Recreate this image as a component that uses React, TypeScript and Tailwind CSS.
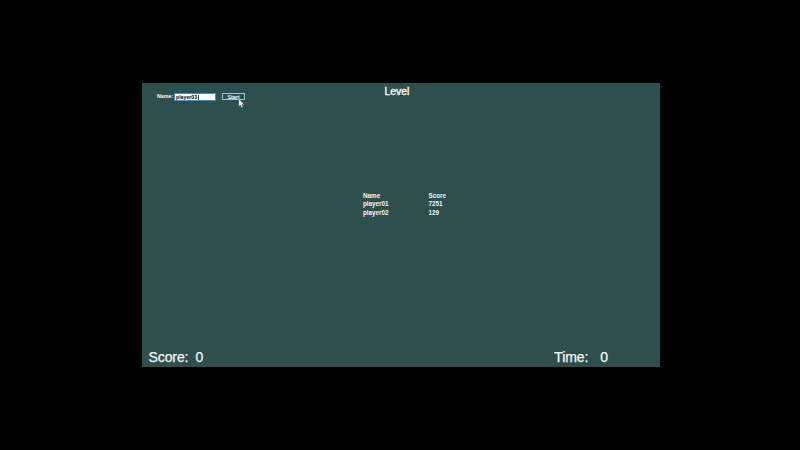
import React, { useState } from 'react';

const scores = [
  { name: 'player01', score: 7251 },
  { name: 'player02', score: 129 },
];

function Cursor() {
  return (
    <svg className="absolute left-[15px] top-[4px]" width="7" height="11" viewBox="0 0 7 11">
      <path d="M0.8 0.8v7.6l1.7-1.5 1.2 2.8 1.3-.6-1.2-2.7h2.4z" fill="#fff" stroke="#1c3030" strokeWidth="0.3" />
    </svg>
  );
}

function Stat({ label, value, className }: { label: string; value: number; className: string }) {
  return (
    <div className={`flex text-[14px] leading-[16px] tracking-[-0.1px] [-webkit-text-stroke:0.25px_#f4f7f7] ${className}`}>
      <span>{label}</span>
      <span>{value}</span>
    </div>
  );
}

export default function App() {
  const [name, setName] = useState('player03');
  return (
    <div className="flex h-[450px] w-[800px] bg-black pl-[142px] pt-[83px] font-['Liberation_Sans',Arial,sans-serif]">
      <main className="flex h-[284px] w-[518px] flex-col bg-[#2f4f4f] text-[#f4f7f7]">
        <header className="flex h-[25px] items-start">
          <label className="ml-[15px] mt-[9px] w-[17px] whitespace-nowrap text-[5.3px] font-bold leading-[8px]">
            Name:
          </label>
          <div className="mt-[10px] flex h-[8px] w-[42px] items-center border border-[#3a8fd6] bg-white">
            <input
              value={name}
              onChange={(e) => setName(e.target.value)}
              className="h-[6px] w-[23px] bg-white pl-px text-[5.2px] font-bold leading-[6px] text-black outline-none"
            />
            <span className="-ml-[0.5px] h-[5px] w-px bg-[#555]" />
          </div>
          <button className="relative ml-[6px] mt-[10px] h-[7px] w-[23px] border border-[#8cc6e8] text-center text-[5.8px] leading-[6px] [-webkit-text-stroke:0.15px_#f4f7f7]">
            Start
            <Cursor />
          </button>
          <h1 className="ml-[139.5px] mt-[3px] text-[10.4px] leading-[12px] [-webkit-text-stroke:0.4px_#f4f7f7]">
            Level
          </h1>
        </header>
        <section className="ml-[221px] mt-[82.6px] grid grid-cols-[65.5px_40px] auto-rows-[8.7px] text-[6.3px] font-bold leading-[9px]">
          <span>Name</span>
          <span>Score</span>
          {scores.map((row) => (
            <React.Fragment key={row.name}>
              <span>{row.name}</span>
              <span>{row.score}</span>
            </React.Fragment>
          ))}
        </section>
        <footer className="mb-[2px] mt-auto flex justify-between pl-[6.5px] pr-[52px]">
          <Stat label="Score:" value={0} className="gap-[7px]" />
          <Stat label="Time:" value={0} className="gap-[12px]" />
        </footer>
      </main>
    </div>
  );
}
